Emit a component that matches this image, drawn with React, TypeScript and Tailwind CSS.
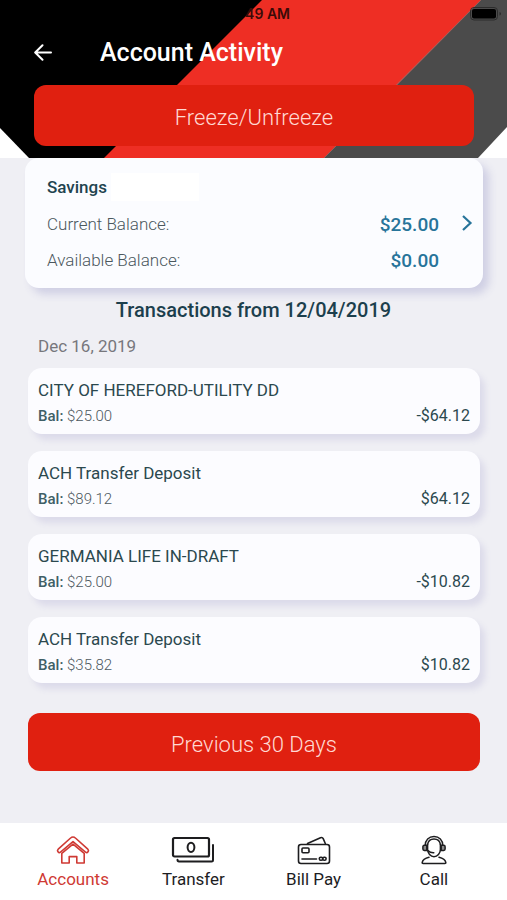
import type { ReactNode } from "react";

interface Transaction {
  id: number;
  title: string;
  balance: string;
  amount: string;
}

const transactions: Transaction[] = [
  { id: 1, title: "CITY OF HEREFORD-UTILITY DD", balance: "$25.00", amount: "-$64.12" },
  { id: 2, title: "ACH Transfer Deposit", balance: "$89.12", amount: "$64.12" },
  { id: 3, title: "GERMANIA LIFE IN-DRAFT", balance: "$25.00", amount: "-$10.82" },
  { id: 4, title: "ACH Transfer Deposit", balance: "$35.82", amount: "$10.82" },
];

function HeaderStripes() {
  return (
    <svg className="absolute inset-0 h-full w-full" viewBox="0 0 507 158" preserveAspectRatio="none" aria-hidden="true">
      <rect width="507" height="158" fill="#ffffff" />
      <path d="M0 0H263L105 158H29L0 128Z" fill="#000000" />
      <path d="M481 0H507V127L478 158H324Z" fill="#4b4b4b" />
      <path d="M262 0H481L324 158H104Z" fill="#ee2e24" />
      <path d="M481 0L324 158" stroke="#9c5a56" strokeWidth="1" />
    </svg>
  );
}

function StatusBar() {
  return (
    <div className="flex h-7 items-center justify-end pr-1">
      <span className="mr-[179px] text-sm leading-5 font-semibold text-[#3a0b08] font-['Inter',sans-serif]">49 AM</span>
      <svg width="34" height="14" viewBox="0 0 34 14" aria-hidden="true">
        <rect x="1.5" y="0.5" width="27" height="12.5" rx="3.5" fill="none" stroke="#2c2c2c" />
        <rect x="3" y="2" width="24" height="9.5" rx="2" fill="#000000" />
        <path d="M30.5 5v3.500c1-.3 1.500-.9 1.500-1.750s-.5-1.450-1.500-1.750z" fill="#2c2c2c" />
      </svg>
    </div>
  );
}

function HomeIcon() {
  return (
    <svg width="34" height="30" viewBox="0 0 34 30" fill="none" stroke="currentColor" strokeWidth="1.6" strokeLinejoin="round" strokeLinecap="round">
      <path d="M17 2c-1 0-1.700.3-2.400 1L2.200 14.200c-1.600 1.600.3 4.400 2.300 3L17 6.600l12.500 10.600c2 1.400 3.900-1.400 2.300-3L19.400 3c-.7-.7-1.400-1-2.400-1z" />
      <path d="M5.800 18.400V28h7.400v-6.400h7.600V28h7.400v-9.600L17 9.200z" />
    </svg>
  );
}

function CashIcon() {
  return (
    <svg width="44" height="30" viewBox="0 0 44 30" fill="none" stroke="currentColor" strokeLinejoin="round" strokeLinecap="round">
      <rect x="2" y="3" width="36" height="18.500" rx="1.500" strokeWidth="2.200" />
      <ellipse cx="20" cy="12.300" rx="3.400" ry="4.600" strokeWidth="2" />
      <path d="M42 10v15c0 1-.5 1.500-1.500 1.500H8c-1 0-1.500-.7-1.500-1.700" strokeWidth="2" />
    </svg>
  );
}

function CardIcon() {
  return (
    <svg width="34" height="30" viewBox="0 0 34 30" fill="none" stroke="currentColor" strokeWidth="1.600" strokeLinejoin="round" strokeLinecap="round">
      <path d="M10.500 8.500L23.500 2.700c1.300-.5 2.200-.2 2.700.9l2.100 4.900" />
      <rect x="1.500" y="9.500" width="31" height="19" rx="2.500" />
      <rect x="5" y="13" width="7" height="4.800" rx="1" />
      <path d="M5 24h14.500" />
      <rect x="22.300" y="22.200" width="3.400" height="3" rx="1.400" />
      <rect x="25.700" y="22.200" width="3.400" height="3" rx="1.400" />
    </svg>
  );
}

function AgentIcon() {
  return (
    <svg width="26" height="30" viewBox="0 0 26 30" fill="none" stroke="currentColor" strokeWidth="1.500" strokeLinejoin="round" strokeLinecap="round">
      <path d="M4.200 10.500C4.200 5 7.800 1.500 13 1.500s8.800 3.500 8.800 9" />
      <path d="M6.600 9.500C7.100 6 9.400 3.900 13 3.900s5.900 2.100 6.400 5.600" />
      <path d="M6.600 9.500v5c0 3.800 3 7.300 6.400 7.300s6.400-3.500 6.400-7.300v-5" />
      <path d="M5.800 10.300H3.300c-.9 0-1.400.5-1.400 1.400v2.400c0 .9.500 1.400 1.400 1.400h2.500z" fill="#8a8a8a" />
      <path d="M20.200 10.300h2.500c.9 0 1.400.5 1.400 1.400v2.400c0 .9-.5 1.400-1.400 1.400h-2.500z" fill="#8a8a8a" />
      <path d="M7.200 15.700c1.400 1.700 3.200 2.100 5.600 2" />
      <path d="M8 22.300c-4.300 1-6.300 2.700-6.800 5.200-.1.700.2 1 .9 1h21.800c.7 0 1-.3.900-1-.5-2.500-2.500-4.200-6.800-5.200" />
    </svg>
  );
}

function NavItem({ label, icon, active }: { label: string; icon: ReactNode; active?: boolean }) {
  return (
    <a href="#" className={"flex flex-col items-center gap-1 " + (active ? "text-[#cf3a34]" : "text-[#1d1d1f]")}>
      {icon}
      <span className="text-[17px] leading-5">{label}</span>
    </a>
  );
}

function TransactionCard({ item }: { item: Transaction }) {
  return (
    <li className="rounded-[14px] bg-[#fcfcff] px-2.5 pt-2.5 pb-1.5 shadow-[5px_6px_6px_#dcdbea]">
      <p className="text-[17px] leading-6 text-[#2b484e]">{item.title}</p>
      <div className="mt-0.5 flex items-center justify-between leading-6">
        <span className="text-[15px] font-light text-[#4d585e]">
          <b className="font-medium text-[#3f5f66]">Bal:</b> {item.balance}
        </span>
        <span className="text-base leading-6 text-[#2b484e]">{item.amount}</span>
      </div>
    </li>
  );
}

export default function App() {
  return (
    <div className="flex min-h-screen flex-col bg-[#efeff4] font-['Roboto',sans-serif]">
      <header className="relative">
        <HeaderStripes />
        <div className="relative pb-3">
          <StatusBar />
          <div className="flex h-[57px] items-center pb-2 pl-[34px]">
            <button type="button" aria-label="Back" className="text-white">
              <svg width="18" height="18" viewBox="0 0 18 18" fill="none" stroke="currentColor" strokeWidth="2" strokeLinejoin="round" strokeLinecap="round">
                <path d="M17 8.500H1.500M8.500 1.200L1.200 8.500l7.300 7.300" />
              </svg>
            </button>
            <h1 className="ml-12 text-[25px] leading-8 font-medium text-white">Account Activity</h1>
          </div>
          <div className="pr-[33px] pl-[34px]">
            <button type="button" className="h-[61px] w-full rounded-xl bg-[#e02010] pt-1 text-[22px] font-light text-[#ffd9d3]">
              Freeze/Unfreeze
            </button>
          </div>
        </div>
      </header>

      <main className="flex-1">
        <section className="mr-6 ml-[25px] rounded-[14px] bg-[#fbfcff] pt-[15px] pr-2.5 pb-[9px] pl-[22px] shadow-[6px_6px_8px_#cfcfe4]">
          <div className="flex items-center">
            <h2 className="text-[17px] leading-7 font-medium text-[#1f444f]">Savings</h2>
            <span className="ml-1 h-7 w-[88px] bg-white" />
          </div>
          <div className="mt-1.5 flex items-start">
            <dl className="flex-1">
              <div className="flex h-9 items-center justify-between">
                <dt className="text-[17px] font-light text-[#4b585e]">Current Balance:</dt>
                <dd className="text-[19px] font-medium text-[#27749a]">$25.00</dd>
              </div>
              <div className="flex h-9 items-center justify-between">
                <dt className="text-[17px] font-light text-[#4b585e]">Available Balance:</dt>
                <dd className="text-[19px] font-medium text-[#27749a]">$0.00</dd>
              </div>
            </dl>
            <button type="button" aria-label="Account details" className="ml-[22px] flex h-8 items-center text-[#27749a]">
              <svg width="12" height="18" viewBox="0 0 12 18" fill="none" stroke="currentColor" strokeWidth="2.200">
                <path d="M2 2l7.500 7L2 16" />
              </svg>
            </button>
          </div>
        </section>

        <h2 className="mt-2 text-center text-xl leading-7 font-medium text-[#1c3f4d]">Transactions from 12/04/2019</h2>

        <section className="pr-[27px] pb-7 pl-7">
          <h3 className="mt-2 px-2.5 text-[17px] leading-7 text-[#77777c]">Dec 16, 2019</h3>
          <ul className="mt-2 flex flex-col gap-[17px]">
            {transactions.map((item) => (
              <TransactionCard key={item.id} item={item} />
            ))}
          </ul>
          <button type="button" className="mt-[30px] h-[58px] w-full rounded-xl bg-[#e02010] pt-1 text-[22px] font-light text-[#ffd9d3]">
            Previous 30 Days
          </button>
        </section>
      </main>

      <nav className="grid grid-cols-4 bg-white px-[13px] pt-3 pb-[11px]">
        <NavItem label="Accounts" icon={<HomeIcon />} active />
        <NavItem label="Transfer" icon={<CashIcon />} />
        <NavItem label="Bill Pay" icon={<CardIcon />} />
        <NavItem label="Call" icon={<AgentIcon />} />
      </nav>
    </div>
  );
}
